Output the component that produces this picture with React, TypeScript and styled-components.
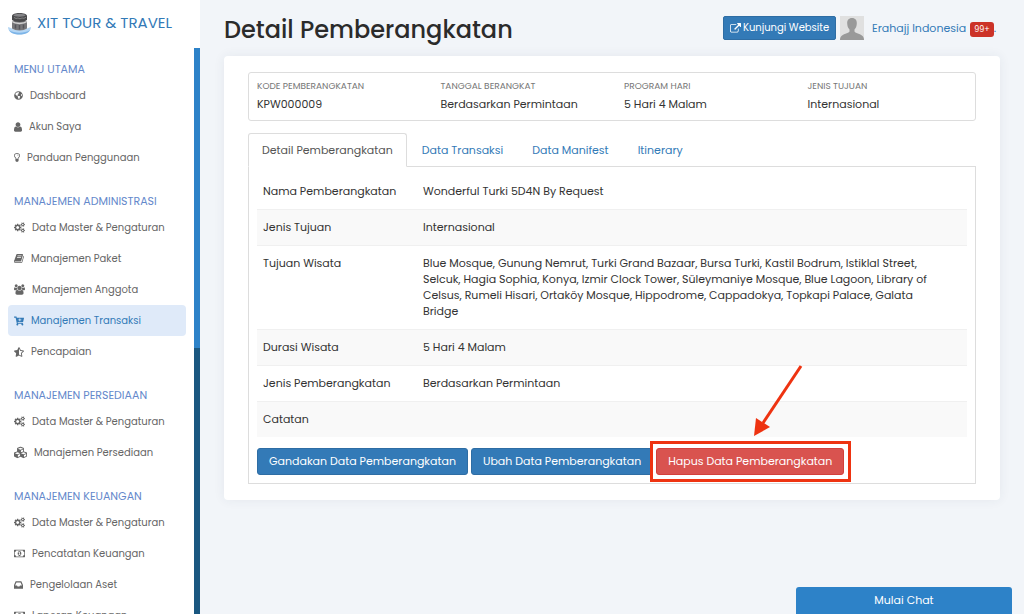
import React from "react";
import styled, { createGlobalStyle } from "styled-components";
import { FaCartPlus, FaCubes, FaGlobeAmericas, FaStarHalfAlt } from "react-icons/fa";

const GlobalStyle = createGlobalStyle`
  *, *::before, *::after { box-sizing: border-box; }
  body {
    margin: 0;
    background: #f2f5f9;
    color: #333;
    font-family: Poppins, Inter, "Liberation Sans", sans-serif;
    font-size: 11px;
    line-height: 16px;
  }
  button { font-family: inherit; cursor: pointer; }
  a { color: #337ab7; text-decoration: none; }
`;

const Page = styled.div`
  display: flex;
  height: 100vh;
  overflow: hidden;
`;

const Sidebar = styled.aside`
  flex: 0 0 200px;
  display: flex;
  flex-direction: column;
  background: #fff;
  overflow: hidden;
`;

const Brand = styled.a`
  flex: 0 0 48px;
  display: flex;
  align-items: center;
  gap: 6px;
  padding: 0 8px 2px;
  font-size: 15px;
  line-height: 20px;
  white-space: nowrap;
`;

const SidebarBody = styled.div`
  flex: 1;
  display: flex;
  min-height: 0;
`;

const Nav = styled.nav`
  flex: 1;
  min-width: 0;
  padding: 11px 8px 0;
  overflow: hidden;
`;

const ScrollTrack = styled.div`
  flex: 0 0 6px;
  background: #1a5780;
`;

const ScrollThumb = styled.div`
  height: 53%;
  background: #2d82c8;
`;

const MenuGroup = styled.section`
  margin-bottom: 18px;
`;

const MenuHeading = styled.h2`
  margin: 0;
  padding: 0 6px;
  color: #6488cb;
  font-size: 11px;
  font-weight: 400;
  line-height: 21px;
  white-space: nowrap;
`;

const MenuList = styled.ul`
  margin: 0;
  padding: 0;
  list-style: none;
`;

const MenuLink = styled.a<{ $active?: boolean }>`
  display: flex;
  align-items: center;
  gap: 7px;
  height: 31px;
  padding: 0 6px;
  border-radius: 4px;
  background: ${(p) => (p.$active ? "#dfeaf9" : "transparent")};
  color: ${(p) => (p.$active ? "#337ab7" : "#666")};
  font-size: 10px;
  white-space: nowrap;
  svg { flex: none; }
`;

const Main = styled.main`
  flex: 1;
  min-width: 0;
  padding: 0 24px;
`;

const TopBar = styled.header`
  display: flex;
  align-items: center;
  justify-content: space-between;
  height: 56px;
`;

const Title = styled.h1`
  margin: 0;
  padding-top: 4px;
  color: #2b2b2b;
  font-size: 24px;
  font-weight: 500;
  line-height: 32px;
  white-space: nowrap;
`;

const UserArea = styled.div`
  display: flex;
  align-items: center;
  gap: 4px;
  margin-right: 4px;
  white-space: nowrap;
`;

const VisitButton = styled.button`
  display: flex;
  align-items: center;
  gap: 2px;
  height: 24px;
  padding: 0 6px;
  border: 1px solid #2e6da4;
  border-radius: 2px;
  background: #337ab7;
  color: #fff;
  font-size: 10px;
`;

const UserLink = styled.a`
  display: flex;
  align-items: center;
  gap: 4px;
  margin-left: 4px;
`;

const Badge = styled.span`
  display: inline-block;
  padding: 0 4px;
  border-radius: 3px;
  background: #cc3328;
  color: #fff;
  font-size: 8px;
  line-height: 15px;
`;

const Card = styled.section`
  padding: 16px 24px;
  border-radius: 4px;
  background: #fff;
  box-shadow: 0 0 12px rgba(40, 60, 90, 0.07);
`;

const Summary = styled.dl`
  display: grid;
  grid-template-columns: repeat(4, 1fr);
  gap: 16px;
  margin: 0 0 12px;
  padding: 5px 0 8px 8px;
  border: 1px solid #ddd;
  border-radius: 3px;
  dt { color: #777; font-size: 9px; }
  dd { margin: 2px 0 0; }
`;

const Tabs = styled.div`
  display: flex;
  gap: 1px;
`;

const Tab = styled.button<{ $active?: boolean }>`
  position: relative;
  height: 34px;
  margin-bottom: -1px;
  padding: 0 13px;
  border: 1px solid ${(p) => (p.$active ? "#ddd" : "transparent")};
  border-bottom-color: ${(p) => (p.$active ? "#fff" : "transparent")};
  border-radius: 3px 3px 0 0;
  background: ${(p) => (p.$active ? "#fff" : "transparent")};
  color: ${(p) => (p.$active ? "#555" : "#337ab7")};
  font-size: 11px;
`;

const Panel = styled.div`
  padding: 6px 8px 8px;
  border: 1px solid #ddd;
`;

const DetailTable = styled.table`
  width: 100%;
  border-collapse: collapse;
  table-layout: fixed;
  th, td {
    padding: 9px 6px 10px;
    border-top: 1px solid #f0f0f0;
    text-align: left;
    vertical-align: top;
    font-weight: 400;
  }
  th { width: 160px; }
  td { padding-right: 24px; }
  tr:first-child > * { border-top-color: transparent; }
  tr:nth-child(even) { background: #f9f9f9; }
`;

const Actions = styled.div`
  display: flex;
  gap: 3px;
  margin-top: 11px;
`;

const ActionButton = styled.button<{ $danger?: boolean }>`
  display: block;
  height: 27px;
  padding: 0 11px;
  border: 1px solid ${(p) => (p.$danger ? "#d43f3a" : "#2e6da4")};
  border-radius: 3px;
  background: ${(p) => (p.$danger ? "#d9534f" : "#337ab7")};
  color: #fff;
  font-size: 11px;
  white-space: nowrap;
`;

const Callout = styled.div`
  position: relative;
`;

const CalloutFrame = styled.div`
  position: absolute;
  inset: -7px -7px -7px -6px;
  border: 3px solid #ee3311;
  pointer-events: none;
`;

const CalloutArrow = styled.svg`
  position: absolute;
  right: 40px;
  bottom: 37px;
  pointer-events: none;
`;

const ChatButton = styled.button`
  position: fixed;
  right: 12px;
  bottom: 0;
  width: 216px;
  height: 27px;
  border: 0;
  border-radius: 3px 3px 0 0;
  background: #2d82c8;
  color: #fff;
  font-size: 11px;
`;

type GlyphProps = { box: [number, number]; width: number; height: number; d: string };

const Glyph = ({ box, width, height, d }: GlyphProps) => (
  <svg width={width} height={height} viewBox={`0 0 ${box[0]} ${box[1]}`} fill="currentColor" aria-hidden="true">
    <path d={d} />
  </svg>
);

const UserIcon = () => (
  <Glyph box={[1280, 1536]} width={8} height={10} d="M1280 1271q0 109-62.500 187t-150.500 78H213q-88 0-150.500-78T0 1271q0-85 8.500-160.500t31.500-152 58.500-131 94-89T327 704q131 128 313 128t313-128q76 0 134.500 34.500t94 89 58.500 131 31.500 152 8.500 160.500zm-256-887q0 159-112.500 271.500T640 768 368.500 655.500 256 384t112.500-271.500T640 0t271.500 112.500T1024 384z" />
);

const BulbIcon = () => (
  <Glyph box={[1024, 1792]} width={6} height={11} d="M736 576q0 13-9.500 22.500T704 608t-22.500-9.500T672 576q0-46-54-71t-106-25q-13 0-22.500-9.500T480 448t9.500-22.500T512 416q50 0 99.500 16t87 54 37.500 90zm160 0q0-72-34.500-134t-90-101.500-123-62T512 256t-136.500 22.500-123 62-90 101.500T128 576q0 101 68 180 10 11 30.500 33t30.500 33q128 153 141 298h228q13-145 141-298 10-11 30.500-33t30.500-33q68-79 68-180zm128 0q0 155-103 268-45 49-74.500 87t-59.500 95.500-34 107.500q47 28 47 82 0 37-25 64 25 27 25 64 0 52-45 81 13 23 13 47 0 46-31.500 71t-77.500 25q-20 44-60 70t-87 26-87-26-60-70q-46 0-77.500-25t-31.500-71q0-24 13-47-45-29-45-81 0-37 25-64-25-27-25-64 0-54 47-82-4-50-34-107.500t-59.500-95.500T103 844Q0 731 0 576q0-99 44.500-184.500t117-142 164-89T512 128t186.500 32.500 164 89 117 142T1024 576z" />
);

const GearsIcon = () => (
  <Glyph box={[1920, 1792]} width={11} height={11} d="M896 896q0-106-75-181t-181-75-181 75-75 181 75 181 181 75 181-75 75-181zm768 512q0-52-38-90t-90-38-90 38-38 90q0 53 37.500 90.500t90.500 37.500 90.500-37.500 37.500-90.500zm0-1024q0-52-38-90t-90-38-90 38-38 90q0 53 37.500 90.500t90.500 37.500 90.500-37.500 37.500-90.500zm-384 421v185q0 10-7 19.500t-16 10.500l-155 24q-11 35-32 76 34 48 90 115 7 11 7 20 0 12-7 19-23 30-82.500 89.500t-78.500 59.500q-11 0-21-7l-115-90q-37 19-77 31-11 108-23 155-7 24-30 24H547q-11 0-20-7.500t-10-17.500l-23-153q-34-10-75-31l-118 89q-7 7-20 7-11 0-21-8-144-133-144-160 0-9 7-19 10-14 41-53t47-61q-23-44-35-82l-152-24q-10-1-17-9.500T0 987V802q0-10 7-19.500t16-10.500l155-24q11-35 32-76-34-48-90-115-7-11-7-20 0-12 7-20 22-30 82-89t79-59q11 0 21 7l115 90q34-18 77-32 11-108 23-154 7-24 30-24h186q11 0 20 7.500t10 17.500l23 153q34 10 75 31l118-89q8-7 20-7 11 0 21 8 144 133 144 160 0 8-7 19-12 16-42 54t-45 60q23 48 34 82l152 23q10 2 17 10.500t7 19.500zm640 533v140q0 16-149 31-12 27-30 52 51 113 51 138 0 4-4 7-122 71-124 71-8 0-46-47t-52-68q-20 2-30 2t-30-2q-14 21-52 68t-46 47q-2 0-124-71-4-3-4-7 0-25 51-138-18-25-30-52-149-15-149-31v-140q0-16 149-31 13-29 30-52-51-113-51-138 0-4 4-7 4-2 35-20t59-34 30-16q8 0 46 46.500t52 67.500q20-2 30-2t30 2q51-71 92-112l6-2q4 0 124 70 4 3 4 7 0 25-51 138 17 23 30 52 149 15 149 31zm0-1024v140q0 16-149 31-12 27-30 52 51 113 51 138 0 4-4 7-122 71-124 71-8 0-46-47t-52-68q-20 2-30 2t-30-2q-14 21-52 68t-46 47q-2 0-124-71-4-3-4-7 0-25 51-138-18-25-30-52-149-15-149-31V314q0-16 149-31 13-29 30-52-51-113-51-138 0-4 4-7 4-2 35-20t59-34 30-16q8 0 46 46.500t52 67.500q20-2 30-2t30 2q51-71 92-112l6-2q4 0 124 70 4 3 4 7 0 25-51 138 17 23 30 52 149 15 149 31z" />
);

const BookIcon = () => (
  <Glyph box={[1664, 1792]} width={10} height={11} d="M1639 478q40 57 18 129l-275 906q-19 64-76.500 107.500T1183 1664H260q-77 0-148.500-53.500T12 1479q-24-67-2-127 0-4 3-27t4-37q1-8-3-21.500t-3-19.500q2-11 8-21t16.500-23.500T52 1179q23-38 45-91.500t30-91.500q3-10 .5-30t-.5-28q3-11 17-28t17-23q21-36 42-92t25-90q1-9-2.500-32t.5-28q4-13 22-30.500t22-22.500q19-26 42.500-84.500T340 411q1-8-3-25.500t-2-26.500q2-8 9-18t18-23 17-21q8-12 16.500-30.500t15-35 16-36 19.500-32T469.500 140t36-11.500T553 134l-1 3q38-9 51-9h761q74 0 114 56t18 130l-274 906q-36 119-71.500 153.500t-128.500 34.500H153q-27 0-38 15-11 16-1 43 24 70 144 70h923q29 0 56-15.500t35-41.500l300-987q7-22 5-57 38 15 59 43zm-1064 2q-4 13 2 22.500t20 9.500h608q13 0 25.500-9.500T1247 480l21-64q4-13-2-22.500t-20-9.500H638q-13 0-25.500 9.500T596 416zm-83 256q-4 13 2 22.500t20 9.500h608q13 0 25.500-9.500T1164 736l21-64q4-13-2-22.500t-20-9.500H555q-13 0-25.500 9.500T513 672z" />
);

const GroupIcon = () => (
  <Glyph box={[1920, 1792]} width={11} height={11} d="M593 896q-162 5-265 128H194q-82 0-138-40.500T0 865q0-353 124-353 6 0 43.500 21t97.500 42.500T384 597q67 0 133-23-5 37-5 66 0 139 81 256zm1071 637q0 120-73 189.500t-194 69.500H523q-121 0-194-69.500T256 1533q0-53 3.500-103.500t14-109T300 1212t43-97.500 62-81 85.500-53.500T602 960q10 0 43 21.500t73 48 107 48 135 21.500 135-21.500 107-48 73-48 43-21.500q61 0 111.500 20t85.500 53.500 62 81 43 97.500 26.500 108.500 14 109 3.500 103.500zM640 256q0 106-75 181t-181 75-181-75-75-181 75-181T384 0t181 75 75 181zm704 384q0 159-112.500 271.500T960 1024 688.500 911.500 576 640t112.500-271.500T960 256t271.500 112.500T1344 640zm576 225q0 78-56 118.500t-138 40.500h-134q-103-123-265-128 81-117 81-256 0-29-5-66 66 23 133 23 59 0 119-21.500t97.500-42.500 43.500-21q124 0 124 353zm-128-609q0 106-75 181t-181 75-181-75-75-181 75-181 181-75 181 75 75 181z" />
);

const MoneyIcon = () => (
  <Glyph box={[1920, 1792]} width={11} height={11} d="M768 1152h384v-96h-128V608H910L762 745l77 80q42-37 55-57h2v288H768v96zm512-256q0 70-21 142t-59.500 134-101.500 101-138 39-138-39-101.500-101-59.500-134-21-142 21-142 59.500-134T822 519t138-39 138 39 101.500 101 59.500 134 21 142zm512 256V640q-106 0-181-75t-75-181H384q0 106-75 181t-181 75v512q106 0 181 75t75 181h1152q0-106 75-181t181-75zm128-832v1152q0 26-19 45t-45 19H64q-26 0-45-19t-19-45V320q0-26 19-45t45-19h1792q26 0 45 19t19 45z" />
);

const InboxIcon = () => (
  <Glyph box={[1536, 1536]} width={9} height={10} d="M1023 832h316q-1-3-2.500-8t-2.500-8L1122 320H414L202 816q-1 3-2.500 8t-2.500 8h316l95 192h320zm513 30v482q0 26-19 45t-45 19H64q-26 0-45-19t-19-45V862q0-62 25-123l238-552q10-25 36.500-42t52.500-17h832q26 0 52.500 17t36.500 42l238 552q25 61 25 123z" />
);

const ExternalIcon = () => (
  <Glyph box={[1792, 1600]} width={11} height={10} d="M1408 928v320q0 119-84.500 203.500T1120 1536H288q-119 0-203.500-84.500T0 1248V416q0-119 84.500-203.500T288 128h704q14 0 23 9t9 23v64q0 14-9 23t-23 9H288q-66 0-113 47t-47 113v832q0 66 47 113t113 47h832q66 0 113-47t47-113V928q0-14 9-23t23-9h64q14 0 23 9t9 23zm384-864v512q0 26-19 45t-45 19-45-19l-176-176-652 652q-10 10-23 10t-23-10l-114-114q-10-10-10-23t10-23l652-652-176-176q-19-19-19-45t19-45 45-19h512q26 0 45 19t19 45z" />
);

const Logo = () => (
  <svg width="23" height="23" viewBox="0 0 23 23" aria-hidden="true">
    <path d="M0 15c0 5 5 7.500 11.500 7.500S23 20 23 15l-3 1c-4 3-13 3-17 0z" fill="#b5d6f4" />
    <path d="M1 18c5 3.500 16 3.500 21 0-2 3.500-6 4.500-10.500 4.500S3 21.500 1 18z" fill="#7db5e8" />
    <path d="M4 9h15v7.500c-3 2.500-12 2.500-15 0z" fill="#77777a" />
    <path d="M4 4c0-2 3.500-3 7.500-3S19 2 19 4v4c-3 2.500-12 2.500-15 0z" fill="#4a4a4c" />
    <ellipse cx="11.500" cy="3.300" rx="6" ry="1.500" fill="#858588" />
    <path d="M4 9.500c3.500 2.500 11.500 2.500 15 0" stroke="#d2d2d2" strokeWidth="1.500" fill="none" />
    <path d="M6 5.500l2 1 2-.5 2 .8 2-.8 2 .3 2-1" stroke="#8f8f8f" strokeWidth=".8" fill="none" />
    <path d="M7.500 12.500v4M11.500 13v4.500M15.500 12.500v4" stroke="#55555a" strokeWidth="1.500" />
  </svg>
);

const Avatar = () => (
  <svg width="24" height="24" viewBox="0 0 24 24" role="img" aria-label="Foto profil">
    <rect width="24" height="24" fill="#e0e0e0" />
    <path d="M12 2c3.300 0 5 2.300 4.800 5.500C16.700 10 16 12 14.500 13.500v2c1 1.800 7 2.500 8.500 5 .6 1 1 2 1 3.500H0c0-1.500.4-2.500 1-3.500 1.500-2.500 7.500-3.200 8.500-5v-2C8 12 7.300 10 7.200 7.500 7 4.300 8.700 2 12 2z" fill="#999" />
  </svg>
);

const menu = [
  {
    heading: "MENU UTAMA",
    items: [
      { icon: <FaGlobeAmericas size={9} />, label: "Dashboard" },
      { icon: <UserIcon />, label: "Akun Saya" },
      { icon: <BulbIcon />, label: "Panduan Penggunaan" },
    ],
  },
  {
    heading: "MANAJEMEN ADMINISTRASI",
    items: [
      { icon: <GearsIcon />, label: "Data Master & Pengaturan" },
      { icon: <BookIcon />, label: "Manajemen Paket" },
      { icon: <GroupIcon />, label: "Manajemen Anggota" },
      { icon: <FaCartPlus size={10} />, label: "Manajemen Transaksi", active: true },
      { icon: <FaStarHalfAlt size={10} />, label: "Pencapaian" },
    ],
  },
  {
    heading: "MANAJEMEN PERSEDIAAN",
    items: [
      { icon: <GearsIcon />, label: "Data Master & Pengaturan" },
      { icon: <FaCubes size={13} />, label: "Manajemen Persediaan" },
    ],
  },
  {
    heading: "MANAJEMEN KEUANGAN",
    items: [
      { icon: <GearsIcon />, label: "Data Master & Pengaturan" },
      { icon: <MoneyIcon />, label: "Pencatatan Keuangan" },
      { icon: <InboxIcon />, label: "Pengelolaan Aset" },
      { icon: <MoneyIcon />, label: "Laporan Keuangan" },
    ],
  },
];

const summary = [
  ["KODE PEMBERANGKATAN", "KPW000009"],
  ["TANGGAL BERANGKAT", "Berdasarkan Permintaan"],
  ["PROGRAM HARI", "5 Hari 4 Malam"],
  ["JENIS TUJUAN", "Internasional"],
];

const tabs = ["Detail Pemberangkatan", "Data Transaksi", "Data Manifest", "Itinerary"];

const details = [
  ["Nama Pemberangkatan", "Wonderful Turki 5D4N By Request"],
  ["Jenis Tujuan", "Internasional"],
  [
    "Tujuan Wisata",
    "Blue Mosque, Gunung Nemrut, Turki Grand Bazaar, Bursa Turki, Kastil Bodrum, Istiklal Street, Selcuk, Hagia Sophia, Konya, Izmir Clock Tower, Süleymaniye Mosque, Blue Lagoon, Library of Celsus, Rumeli Hisari, Ortaköy Mosque, Hippodrome, Cappadokya, Topkapi Palace, Galata Bridge",
  ],
  ["Durasi Wisata", "5 Hari 4 Malam"],
  ["Jenis Pemberangkatan", "Berdasarkan Permintaan"],
  ["Catatan", ""],
];

export default function App() {
  return (
    <>
      <GlobalStyle />
      <Page>
        <Sidebar>
          <Brand href="#">
            <Logo />
            XIT TOUR &amp; TRAVEL
          </Brand>
          <SidebarBody>
            <Nav>
              {menu.map((group) => (
                <MenuGroup key={group.heading}>
                  <MenuHeading>{group.heading}</MenuHeading>
                  <MenuList>
                    {group.items.map((item) => (
                      <li key={item.label}>
                        <MenuLink href="#" $active={"active" in item}>
                          {item.icon}
                          {item.label}
                        </MenuLink>
                      </li>
                    ))}
                  </MenuList>
                </MenuGroup>
              ))}
            </Nav>
            <ScrollTrack>
              <ScrollThumb />
            </ScrollTrack>
          </SidebarBody>
        </Sidebar>
        <Main>
          <TopBar>
            <Title>Detail Pemberangkatan</Title>
            <UserArea>
              <VisitButton type="button">
                <ExternalIcon />
                Kunjungi Website
              </VisitButton>
              <Avatar />
              <UserLink href="#">
                Erahajj Indonesia
                <span>
                  <Badge>99+</Badge>.
                </span>
              </UserLink>
            </UserArea>
          </TopBar>
          <Card>
            <Summary>
              {summary.map(([term, value]) => (
                <div key={term}>
                  <dt>{term}</dt>
                  <dd>{value}</dd>
                </div>
              ))}
            </Summary>
            <Tabs role="tablist">
              {tabs.map((tab, i) => (
                <Tab key={tab} type="button" role="tab" aria-selected={i === 0} $active={i === 0}>
                  {tab}
                </Tab>
              ))}
            </Tabs>
            <Panel role="tabpanel">
              <DetailTable>
                <tbody>
                  {details.map(([label, value]) => (
                    <tr key={label}>
                      <th scope="row">{label}</th>
                      <td>{value}</td>
                    </tr>
                  ))}
                </tbody>
              </DetailTable>
              <Actions>
                <ActionButton type="button">Gandakan Data Pemberangkatan</ActionButton>
                <ActionButton type="button">Ubah Data Pemberangkatan</ActionButton>
                <Callout>
                  <ActionButton type="button" $danger>
                    Hapus Data Pemberangkatan
                  </ActionButton>
                  <CalloutFrame />
                  <CalloutArrow width="52" height="74" viewBox="0 0 52 74" aria-hidden="true">
                    <path d="M49 2L11 59" stroke="#ee3311" strokeWidth="3" />
                    <path d="M2 72L4 54L18 63z" fill="#ee3311" />
                  </CalloutArrow>
                </Callout>
              </Actions>
            </Panel>
          </Card>
        </Main>
      </Page>
      <ChatButton type="button">Mulai Chat</ChatButton>
    </>
  );
}
